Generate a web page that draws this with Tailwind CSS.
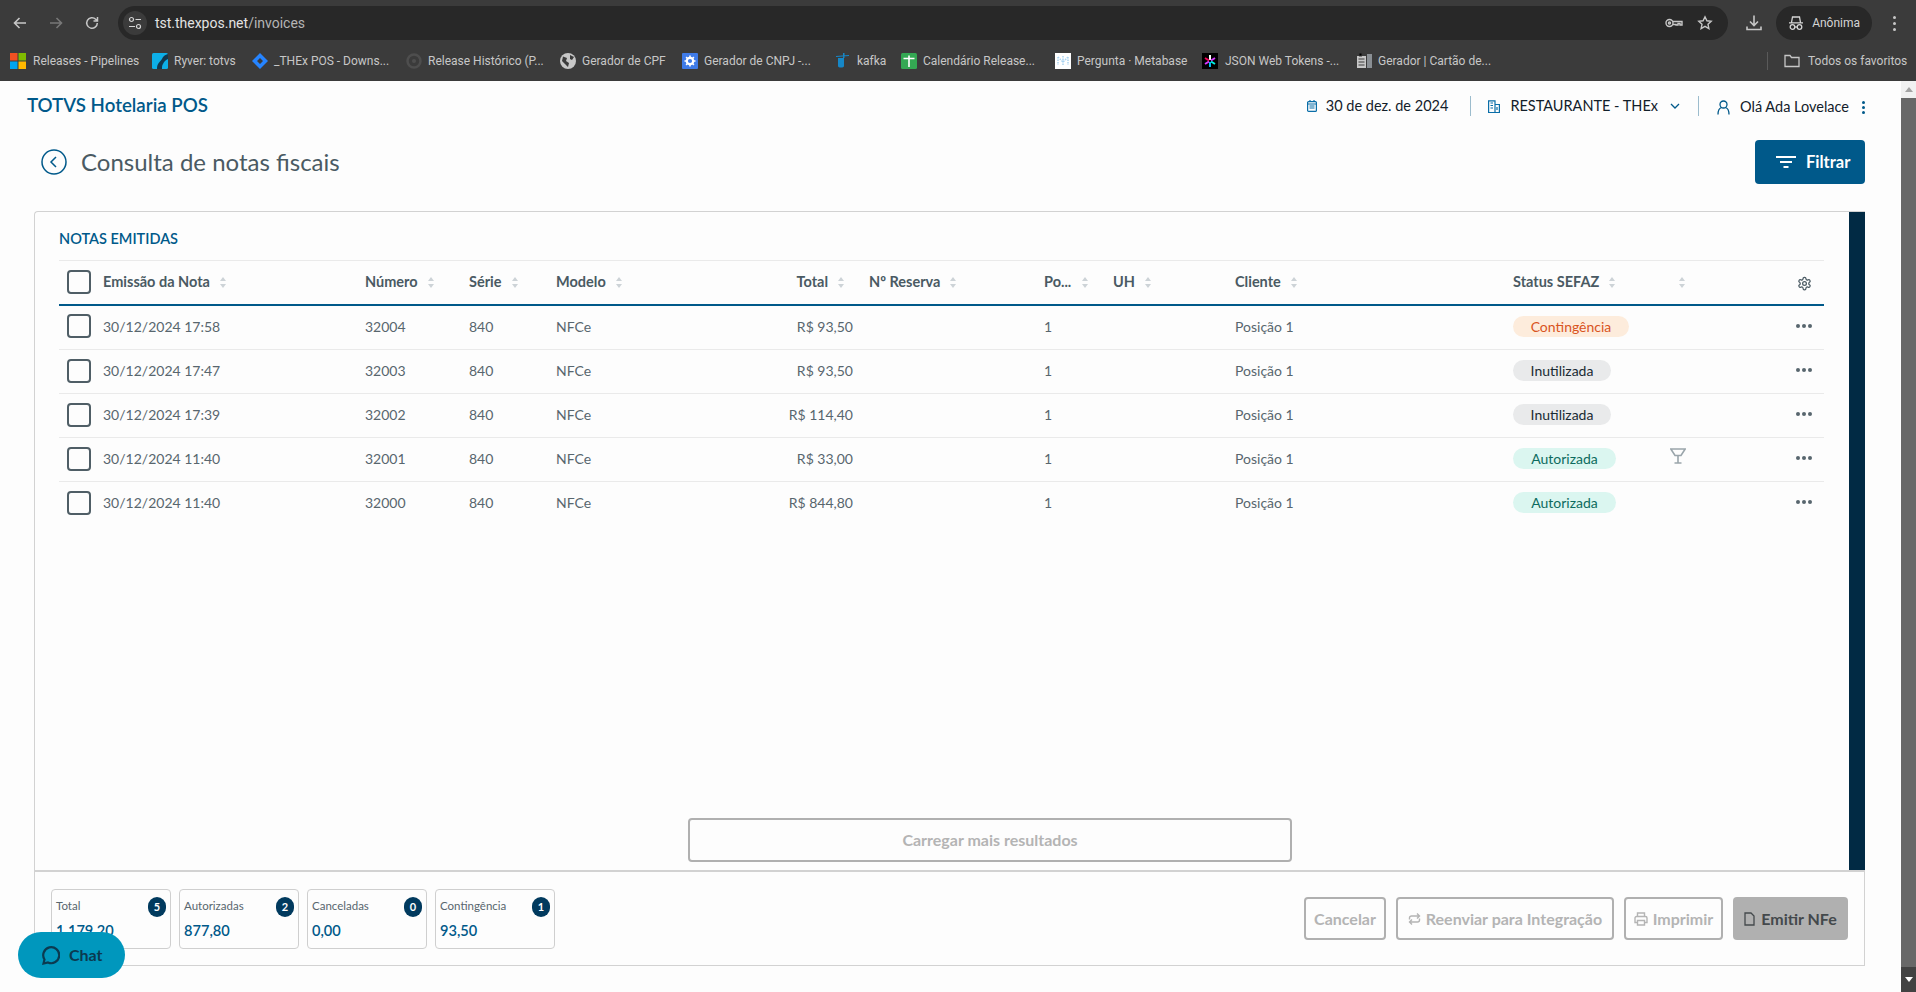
<!DOCTYPE html>
<html lang="pt-BR">
  <head>
    <meta charset="UTF-8" />
    <meta name="viewport" content="width=device-width, initial-scale=1.0" />
    <script src="https://cdn.jsdelivr.net/npm/@tailwindcss/browser@4"></script>
    <title>TOTVS Hotelaria POS</title>
  </head>
  <body class="h-[992px] w-[1916px] overflow-hidden flex flex-col bg-[#fdfdfd] font-['Lato',sans-serif]">
    <!-- Browser chrome -->
    <div class="h-[81px] shrink-0 bg-[#3b3b3b] font-['Roboto',sans-serif]">
      <div class="h-[40px] pt-[6px] flex items-start">
        <div class="w-[118px] h-[34px] flex items-center text-[#c7c7c7]">
          <svg class="ml-[12px]" width="16" height="16" viewBox="0 0 16 16" fill="none" stroke="currentColor" stroke-width="1.6"><path d="M14 8H2.500M7.500 3 2.500 8l5 5" /></svg>
          <svg class="ml-[20px] text-[#787878]" width="16" height="16" viewBox="0 0 16 16" fill="none" stroke="currentColor" stroke-width="1.6"><path d="M2 8h11.500M8.500 3l5 5-5 5" /></svg>
          <svg class="ml-[20px]" width="16" height="16" viewBox="0 0 16 16" fill="none" stroke="currentColor" stroke-width="1.5"><path d="M13.300 8a5.300 5.300 0 1 1-1.600-3.800L13.500 6M13.500 2v4h-4" /></svg>
        </div>
        <div class="w-[1612px] h-[34px] rounded-full bg-[#282828] flex items-center">
          <div class="ml-[5px] w-[24px] h-[24px] rounded-full bg-[#3b3b3b] flex items-center justify-center">
            <svg width="14" height="14" viewBox="0 0 14 14" fill="none" stroke="#d5d5d5" stroke-width="1.2"><circle cx="3.500" cy="3.500" r="2" /><path d="M7.500 3.500H13M1 10.500h6" /><circle cx="10.500" cy="10.500" r="2" /></svg>
          </div>
          <span class="ml-[8px] text-[14px] text-[#e3e3e3]">tst.thexpos.net<span class="text-[#b5b5b5]">/invoices</span></span>
          <svg class="ml-auto" width="18" height="12" viewBox="0 0 18 12" fill="none" stroke="#c7c7c7" stroke-width="1.400"><circle cx="4.500" cy="6" r="3.500" /><circle cx="4.500" cy="6" r="1" /><path d="M8 4.500h9v3.500h-2V6.500h-2v1.500h-2V7.500H8" /></svg>
          <svg class="ml-[14px] mr-[15px]" width="16" height="16" viewBox="0 0 16 16" fill="none" stroke="#c7c7c7" stroke-width="1.400"><path d="m8 1.800 1.900 4 4.300.5-3.200 3 .9 4.300L8 11.400l-3.900 2.200.9-4.300-3.200-3 4.300-.5z" /></svg>
        </div>
        <div class="w-[48px] h-[34px] pl-[4px] flex items-center justify-center">
          <svg width="18" height="18" viewBox="0 0 18 18" fill="none" stroke="#c7c7c7" stroke-width="1.600"><path d="M9 1.500V11M5 7.500 9 11.500l4-4M2 12.500v3h14v-3" /></svg>
        </div>
        <div class="w-[96px] h-[34px] rounded-full bg-[#282828] flex items-center text-[#d5d5d5]">
          <svg class="ml-[12px]" width="16" height="16" viewBox="0 0 16 16" fill="none" stroke="currentColor" stroke-width="1.300"><path d="M1 7.800h14M3.500 7.500l1-5.500h7l1 5.500" /><circle cx="4.500" cy="12" r="2.300" /><circle cx="11.500" cy="12" r="2.300" /><path d="M6.800 12h2.400" /></svg>
          <span class="ml-[8px] text-[12px]">Anônima</span>
        </div>
        <div class="w-[44px] h-[34px] flex flex-col items-center justify-center gap-[3px]">
          <span class="w-[3px] h-[3px] rounded-full bg-[#c7c7c7]"></span>
          <span class="w-[3px] h-[3px] rounded-full bg-[#c7c7c7]"></span>
          <span class="w-[3px] h-[3px] rounded-full bg-[#c7c7c7]"></span>
        </div>
      </div>
      <div class="h-[41px] pl-[10px] flex items-center text-[12px] text-[#c7c7c7] whitespace-nowrap">
        <div class="w-[142px] flex items-center gap-[7px]">
          <svg width="16" height="16" viewBox="0 0 16 16"><rect width="7.500" height="7.500" fill="#f25022" /><rect x="8.500" width="7.500" height="7.500" fill="#7fba00" /><rect y="8.500" width="7.500" height="7.500" fill="#00a4ef" /><rect x="8.500" y="8.500" width="7.500" height="7.500" fill="#ffb900" /></svg>
          <span>Releases - Pipelines</span>
        </div>
        <div class="w-[100px] flex items-center gap-[6px]">
          <svg width="16" height="16" viewBox="0 0 16 16"><rect width="16" height="16" rx="1.500" fill="#0dafe8" /><path d="M5 16C5 10 8 9 10 6c1-2 2-4 6-5v5c-3 1-4 3-5 5-1 1-1 3-1 5z" fill="#13374d" /></svg>
          <span>Ryver: totvs</span>
        </div>
        <div class="w-[154px] flex items-center gap-[6px]">
          <svg width="16" height="16" viewBox="0 0 16 16"><path d="M8 0 16 8 8 16 0 8zM8 5 5 8l3 3 3-3z" fill="#2684ff" fill-rule="evenodd" /></svg>
          <span>_THEx POS - Downs...</span>
        </div>
        <div class="w-[154px] flex items-center gap-[6px]">
          <svg width="16" height="16" viewBox="0 0 16 16" fill="none"><circle cx="8" cy="8" r="6.500" stroke="#4e4e4e" stroke-width="2.500" /><circle cx="8" cy="8" r="2" fill="#4e4e4e" /></svg>
          <span>Release Histórico (P...</span>
        </div>
        <div class="w-[122px] flex items-center gap-[6px]">
          <svg width="16" height="16" viewBox="0 0 16 16"><circle cx="8" cy="8" r="8" fill="#c7c7c7" /><path d="M3 3.500 7 5 6 8l3 2-1 4-3-3-3-3zM10 2l4 2-2 3-2-1z" fill="#3b3b3b" /></svg>
          <span>Gerador de CPF</span>
        </div>
        <div class="w-[153px] flex items-center gap-[6px]">
          <svg width="16" height="16" viewBox="0 0 16 16"><rect width="16" height="16" rx="1" fill="#3f7be8" /><circle cx="8" cy="8" r="3.200" fill="none" stroke="#fff" stroke-width="2.200" /><path d="M8 2.500v2M8 11.500v2M2.500 8h2M11.500 8h2M4.100 4.100l1.400 1.400M10.500 10.500l1.400 1.400M4.100 11.900l1.400-1.400M10.500 5.500l1.400-1.400" stroke="#fff" stroke-width="1.600" /></svg>
          <span>Gerador de CNPJ -...</span>
        </div>
        <div class="w-[66px] flex items-center gap-[7px]">
          <svg width="15" height="16" viewBox="0 0 15 16"><path d="M3 5h6v8c0 2-6 2-6 0zM8 0h1.500v5H8zM1 3l13-1v1L1 4z" fill="#1687c7" /></svg>
          <span>kafka</span>
        </div>
        <div class="w-[154px] flex items-center gap-[6px]">
          <svg width="16" height="16" viewBox="0 0 16 16"><rect width="16" height="16" rx="1.500" fill="#34a853" /><path d="M2.500 5.500h11M8 2.500V14" stroke="#fff" stroke-width="1.600" /></svg>
          <span>Calendário Release...</span>
        </div>
        <div class="w-[147px] flex items-center gap-[6px]">
          <svg width="16" height="16" viewBox="0 0 16 16"><rect width="16" height="16" fill="#fff" /><path d="M3 4v8M13 4v8M8 3v10M3 4l5 5 5-5" stroke="#a9d3f0" stroke-width="1.500" fill="none" stroke-dasharray="1.500 1" /></svg>
          <span>Pergunta · Metabase</span>
        </div>
        <div class="w-[155px] flex items-center gap-[7px]">
          <svg width="16" height="16" viewBox="0 0 16 16"><rect width="16" height="16" fill="#000" /><path d="M8 2v5" stroke="#fff" stroke-width="2" /><path d="M8 9v5" stroke="#00b9f1" stroke-width="2" /><path d="m3 5 4 2.500" stroke="#fb015b" stroke-width="2" /><path d="m13 5-4 2.500" stroke="#d63aff" stroke-width="2" /><path d="m3 11 4-2.500" stroke="#d63aff" stroke-width="2" /><path d="m13 11-4-2.500" stroke="#00f2e6" stroke-width="2" /></svg>
          <span>JSON Web Tokens -...</span>
        </div>
        <div class="w-[410px] flex items-center gap-[6px]">
          <svg width="15" height="16" viewBox="0 0 15 16"><rect y="3" width="9" height="12" fill="#c7c7c7" /><rect x="10" y="1" width="5" height="14" fill="#8a8f94" /><path d="M2 0h3v3H2zM1.500 6h6M1.500 9h6M1.500 12h6" stroke="#3b3b3b" /></svg>
          <span>Gerador | Cartão de...</span>
        </div>
        <div class="w-px h-[18px] bg-[#5a5a5a]"></div>
        <div class="ml-[16px] flex items-center gap-[8px]">
          <svg width="16" height="14" viewBox="0 0 16 14" fill="none" stroke="#c7c7c7" stroke-width="1.300"><path d="M1 2v10.500h14V3.500H7.500L6 1.500H1z" /></svg>
          <span>Todos os favoritos</span>
        </div>
      </div>
    </div>

    <div class="flex-1 flex min-h-0">
      <!-- Page -->
      <div class="relative w-[1901px] flex flex-col">
        <header class="h-[48px] shrink-0 pl-[27px] pt-[13px] flex items-start">
          <span class="text-[18.7px] leading-[22px] font-semibold text-[#00598a]">TOTVS Hotelaria POS</span>
          <div class="ml-auto mr-[36px] flex items-center text-[14.5px] leading-[22px] text-[#12202a]">
            <svg width="10" height="12" viewBox="0 0 10 12" fill="none" stroke="#0a6ea8" stroke-width="1.200"><rect x=".6" y="1.600" width="8.800" height="9.800" rx="1" /><path d="M.6 4h8.800M2.500 6h5M2.500 8h5M3 0v2M7 0v2" /></svg>
            <span class="ml-[9px]">30 de dez. de 2024</span>
            <span class="ml-[22px] w-px h-[20px] bg-[#9cbccd]"></span>
            <svg class="ml-[17px]" width="12" height="13" viewBox="0 0 12 13" fill="none" stroke="#0a6ea8" stroke-width="1.200"><path d="M.6 12.500V.8h6.400v11.700M7 4.500h4.400v8M0 12.500h12M2.500 3h2.500M2.500 5.500h2.500M2.500 8h2.500M9 7v3" /></svg>
            <span class="ml-[10px]">RESTAURANTE - THEx</span>
            <svg class="ml-[12px]" width="10" height="6" viewBox="0 0 10 6" fill="none" stroke="#00598a" stroke-width="1.300"><path d="m1 1 4 4 4-4" /></svg>
            <span class="ml-[18px] w-px h-[20px] bg-[#9cbccd]"></span>
            <svg class="ml-[18px] mt-[2px]" width="13" height="15" viewBox="0 0 13 15" fill="none" stroke="#00598a" stroke-width="1.300"><circle cx="6.500" cy="4.500" r="3.500" /><path d="M1 14.500c0-4 2-6.500 3.500-7M12 14.500c0-4-2-6.500-3.500-7" /></svg>
            <span class="ml-[10px] mt-[2px]">Olá Ada Lovelace</span>
            <span class="ml-[13px] mt-[2px] flex flex-col gap-[2px]">
              <span class="w-[3px] h-[3px] rounded-full bg-[#00598a]"></span>
              <span class="w-[3px] h-[3px] rounded-full bg-[#00598a]"></span>
              <span class="w-[3px] h-[3px] rounded-full bg-[#00598a]"></span>
            </span>
          </div>
        </header>

        <div class="h-[82px] shrink-0 pl-[41px] pr-[36px] pt-[11px] flex items-start">
          <div class="h-[44px] flex items-center gap-[14px]">
            <svg width="26" height="26" viewBox="0 0 26 26" fill="none" stroke="#00598a" stroke-width="1.500"><circle cx="13" cy="13" r="12" /><path d="m15 8-5 5 5 5" /></svg>
            <h1 class="text-[24px] font-normal text-[#4a5a63]">Consulta de notas fiscais</h1>
          </div>
          <button class="ml-auto w-[110px] h-[44px] pl-[21px] rounded-[4px] bg-[#00598a] text-white text-[16.5px] font-bold flex items-center gap-[10px]">
            <svg width="20" height="12" viewBox="0 0 20 12" fill="none" stroke="#fff" stroke-width="1.800"><path d="M0 1h20M4 6h12M7.500 11h5" /></svg>
            Filtrar
          </button>
        </div>

        <!-- Main card -->
        <div class="ml-[34px] w-[1831px] h-[661px] flex border border-[#d2d2d2] border-r-0 border-b-2 rounded-tl-[4px]">
          <div class="flex-1 flex flex-col pl-[24px] pr-[24px]">
            <h2 class="h-[48px] pt-[18px] text-[14.5px] leading-[18px] font-semibold text-[#00598a]">NOTAS EMITIDAS</h2>
            <table class="w-[1765px] table-fixed border-collapse text-[14px] text-[#58666e]">
              <colgroup>
                <col class="w-[44px]" /><col class="w-[262px]" /><col class="w-[104px]" /><col class="w-[87px]" /><col class="w-[144px]" /><col class="w-[169px]" /><col class="w-[175px]" /><col class="w-[69px]" /><col class="w-[122px]" /><col class="w-[278px]" /><col class="w-[157px]" /><col class="w-[114px]" /><col class="w-[40px]" />
              </colgroup>
              <thead class="border-t border-[#eaeaea] border-b-2 border-b-[#00598a] text-[14.5px]">
                <tr class="h-[44px] text-left text-[#4a5a63]">
                  <th class="pl-[8px] font-bold"><span class="block w-[24px] h-[24px] rounded-[4px] border-2 border-[#4f5e66]"></span></th>
                  <th class="font-bold"><span class="flex items-center gap-[10px]">Emissão da Nota <svg width="6" height="11" viewBox="0 0 6 11" fill="#cdd3d7"><path d="M3 0l3 4H0zM3 11 0 7h6z" /></svg></span></th>
                  <th class="font-bold"><span class="flex items-center gap-[10px]">Número <svg width="6" height="11" viewBox="0 0 6 11" fill="#cdd3d7"><path d="M3 0l3 4H0zM3 11 0 7h6z" /></svg></span></th>
                  <th class="font-bold"><span class="flex items-center gap-[10px]">Série <svg width="6" height="11" viewBox="0 0 6 11" fill="#cdd3d7"><path d="M3 0l3 4H0zM3 11 0 7h6z" /></svg></span></th>
                  <th class="font-bold"><span class="flex items-center gap-[10px]">Modelo <svg width="6" height="11" viewBox="0 0 6 11" fill="#cdd3d7"><path d="M3 0l3 4H0zM3 11 0 7h6z" /></svg></span></th>
                  <th class="pr-[25px] font-bold"><span class="flex items-center justify-end gap-[10px]">Total <svg width="6" height="11" viewBox="0 0 6 11" fill="#cdd3d7"><path d="M3 0l3 4H0zM3 11 0 7h6z" /></svg></span></th>
                  <th class="font-bold"><span class="flex items-center gap-[10px]">Nº Reserva <svg width="6" height="11" viewBox="0 0 6 11" fill="#cdd3d7"><path d="M3 0l3 4H0zM3 11 0 7h6z" /></svg></span></th>
                  <th class="font-bold"><span class="flex items-center gap-[11px]">Po... <svg width="6" height="11" viewBox="0 0 6 11" fill="#cdd3d7"><path d="M3 0l3 4H0zM3 11 0 7h6z" /></svg></span></th>
                  <th class="font-bold"><span class="flex items-center gap-[10px]">UH <svg width="6" height="11" viewBox="0 0 6 11" fill="#cdd3d7"><path d="M3 0l3 4H0zM3 11 0 7h6z" /></svg></span></th>
                  <th class="font-bold"><span class="flex items-center gap-[10px]">Cliente <svg width="6" height="11" viewBox="0 0 6 11" fill="#cdd3d7"><path d="M3 0l3 4H0zM3 11 0 7h6z" /></svg></span></th>
                  <th class="font-bold"><span class="flex items-center gap-[10px]">Status SEFAZ <svg width="6" height="11" viewBox="0 0 6 11" fill="#cdd3d7"><path d="M3 0l3 4H0zM3 11 0 7h6z" /></svg></span></th>
                  <th class="pl-[9px]"><svg width="6" height="11" viewBox="0 0 6 11" fill="#cdd3d7"><path d="M3 0l3 4H0zM3 11 0 7h6z" /></svg></th>
                  <th class="text-center"><svg class="inline-block" width="15" height="15" viewBox="0 0 24 24" fill="none" stroke="#4a5a63" stroke-width="2"><path d="M12.220 2h-.44a2 2 0 0 0-2 2v.18a2 2 0 0 1-1 1.730l-.43.25a2 2 0 0 1-2 0l-.15-.08a2 2 0 0 0-2.730.73l-.22.38a2 2 0 0 0 .73 2.730l.15.1a2 2 0 0 1 1 1.720v.51a2 2 0 0 1-1 1.740l-.15.09a2 2 0 0 0-.73 2.730l.22.38a2 2 0 0 0 2.730.73l.15-.08a2 2 0 0 1 2 0l.43.25a2 2 0 0 1 1 1.730V20a2 2 0 0 0 2 2h.44a2 2 0 0 0 2-2v-.18a2 2 0 0 1 1-1.730l.43-.25a2 2 0 0 1 2 0l.15.08a2 2 0 0 0 2.730-.73l.22-.39a2 2 0 0 0-.73-2.730l-.15-.08a2 2 0 0 1-1-1.740v-.5a2 2 0 0 1 1-1.740l.15-.09a2 2 0 0 0 .73-2.730l-.22-.38a2 2 0 0 0-2.730-.73l-.15.08a2 2 0 0 1-2 0l-.43-.25a2 2 0 0 1-1-1.730V4a2 2 0 0 0-2-2z" /><circle cx="12" cy="12" r="3" /></svg></th>
                </tr>
              </thead>
              <tbody class="[&_td]:pb-[2px]">
                <tr class="h-[45px] border-b border-[#eaeaea]">
                  <td class="pl-[8px]"><span class="block w-[24px] h-[24px] rounded-[4px] border-2 border-[#4f5e66]"></span></td>
                  <td>30/12/2024 17:58</td><td>32004</td><td>840</td><td>NFCe</td><td class="pr-[16px] text-right">R$ 93,50</td><td></td><td>1</td><td></td><td>Posição 1</td>
                  <td><span class="inline-block h-[21px] leading-[21px] w-[116px] text-center rounded-full bg-[#fdecdc] text-[#d9541e]">Contingência</span></td>
                  <td></td>
                  <td class="text-center align-top pt-[6px]"><span class="inline-flex gap-[2px]"><i class="w-[4px] h-[4px] rounded-full bg-[#58666e]"></i><i class="w-[4px] h-[4px] rounded-full bg-[#58666e]"></i><i class="w-[4px] h-[4px] rounded-full bg-[#58666e]"></i></span></td>
                </tr>
                <tr class="h-[44px] border-b border-[#eaeaea]">
                  <td class="pl-[8px]"><span class="block w-[24px] h-[24px] rounded-[4px] border-2 border-[#4f5e66]"></span></td>
                  <td>30/12/2024 17:47</td><td>32003</td><td>840</td><td>NFCe</td><td class="pr-[16px] text-right">R$ 93,50</td><td></td><td>1</td><td></td><td>Posição 1</td>
                  <td><span class="inline-block h-[21px] leading-[21px] w-[98px] text-center rounded-full bg-[#e9eaeb] text-[#1a2a33]">Inutilizada</span></td>
                  <td></td>
                  <td class="text-center align-top pt-[6px]"><span class="inline-flex gap-[2px]"><i class="w-[4px] h-[4px] rounded-full bg-[#58666e]"></i><i class="w-[4px] h-[4px] rounded-full bg-[#58666e]"></i><i class="w-[4px] h-[4px] rounded-full bg-[#58666e]"></i></span></td>
                </tr>
                <tr class="h-[44px] border-b border-[#eaeaea]">
                  <td class="pl-[8px]"><span class="block w-[24px] h-[24px] rounded-[4px] border-2 border-[#4f5e66]"></span></td>
                  <td>30/12/2024 17:39</td><td>32002</td><td>840</td><td>NFCe</td><td class="pr-[16px] text-right">R$ 114,40</td><td></td><td>1</td><td></td><td>Posição 1</td>
                  <td><span class="inline-block h-[21px] leading-[21px] w-[98px] text-center rounded-full bg-[#e9eaeb] text-[#1a2a33]">Inutilizada</span></td>
                  <td></td>
                  <td class="text-center align-top pt-[6px]"><span class="inline-flex gap-[2px]"><i class="w-[4px] h-[4px] rounded-full bg-[#58666e]"></i><i class="w-[4px] h-[4px] rounded-full bg-[#58666e]"></i><i class="w-[4px] h-[4px] rounded-full bg-[#58666e]"></i></span></td>
                </tr>
                <tr class="h-[44px] border-b border-[#eaeaea]">
                  <td class="pl-[8px]"><span class="block w-[24px] h-[24px] rounded-[4px] border-2 border-[#4f5e66]"></span></td>
                  <td>30/12/2024 11:40</td><td>32001</td><td>840</td><td>NFCe</td><td class="pr-[16px] text-right">R$ 33,00</td><td></td><td>1</td><td></td><td>Posição 1</td>
                  <td><span class="inline-block h-[21px] leading-[21px] w-[103px] text-center rounded-full bg-[#dbf6f0] text-[#0d6b5e]">Autorizada</span></td>
                  <td class="align-top pt-[10px]"><svg class="block" width="16" height="16" viewBox="0 0 16 16" fill="none" stroke="#9aa5ab" stroke-width="1.600"><path d="M.8 1h14.400L11 7.500H5zM8 8v6.500M4.500 15h7" /></svg></td>
                  <td class="text-center align-top pt-[6px]"><span class="inline-flex gap-[2px]"><i class="w-[4px] h-[4px] rounded-full bg-[#58666e]"></i><i class="w-[4px] h-[4px] rounded-full bg-[#58666e]"></i><i class="w-[4px] h-[4px] rounded-full bg-[#58666e]"></i></span></td>
                </tr>
                <tr class="h-[44px]">
                  <td class="pl-[8px]"><span class="block w-[24px] h-[24px] rounded-[4px] border-2 border-[#4f5e66]"></span></td>
                  <td>30/12/2024 11:40</td><td>32000</td><td>840</td><td>NFCe</td><td class="pr-[16px] text-right">R$ 844,80</td><td></td><td>1</td><td></td><td>Posição 1</td>
                  <td><span class="inline-block h-[21px] leading-[21px] w-[103px] text-center rounded-full bg-[#dbf6f0] text-[#0d6b5e]">Autorizada</span></td>
                  <td></td>
                  <td class="text-center align-top pt-[6px]"><span class="inline-flex gap-[2px]"><i class="w-[4px] h-[4px] rounded-full bg-[#58666e]"></i><i class="w-[4px] h-[4px] rounded-full bg-[#58666e]"></i><i class="w-[4px] h-[4px] rounded-full bg-[#58666e]"></i></span></td>
                </tr>
              </tbody>
            </table>
            <div class="mt-auto mb-[8px] flex justify-center pl-[96px]">
              <button class="w-[604px] h-[44px] rounded-[4px] border-2 border-[#b0b0b0] text-[#b4b4b4] text-[16px] font-bold">Carregar mais resultados</button>
            </div>
          </div>
          <div class="w-[16px] bg-[#012a44]"></div>
        </div>

        <!-- Footer panel -->
        <div class="ml-[34px] w-[1831px] h-[94px] border border-t-0 border-[#d2d2d2] pl-[16px] pr-[16px] pt-[17px] flex items-start">
          <div class="w-[120px] h-[60px] mr-[8px] rounded-[4px] border border-[#cfcfcf] relative px-[4px] pt-[8px]">
            <p class="text-[11.5px] leading-[16px] text-[#58666e]">Total</p>
            <p class="mt-[7px] text-[14.6px] leading-[20px] font-semibold text-[#00598a]">1.179,20</p>
            <span class="absolute top-[7px] right-[4px] w-[18px] h-[20px] rounded-full bg-[#013a5e] text-white text-[11px] font-bold flex items-center justify-center">5</span>
          </div>
          <div class="w-[120px] h-[60px] mr-[8px] rounded-[4px] border border-[#cfcfcf] relative px-[4px] pt-[8px]">
            <p class="text-[11.5px] leading-[16px] text-[#58666e]">Autorizadas</p>
            <p class="mt-[7px] text-[14.6px] leading-[20px] font-semibold text-[#00598a]">877,80</p>
            <span class="absolute top-[7px] right-[4px] w-[18px] h-[20px] rounded-full bg-[#013a5e] text-white text-[11px] font-bold flex items-center justify-center">2</span>
          </div>
          <div class="w-[120px] h-[60px] mr-[8px] rounded-[4px] border border-[#cfcfcf] relative px-[4px] pt-[8px]">
            <p class="text-[11.5px] leading-[16px] text-[#58666e]">Canceladas</p>
            <p class="mt-[7px] text-[14.6px] leading-[20px] font-semibold text-[#00598a]">0,00</p>
            <span class="absolute top-[7px] right-[4px] w-[18px] h-[20px] rounded-full bg-[#013a5e] text-white text-[11px] font-bold flex items-center justify-center">0</span>
          </div>
          <div class="w-[120px] h-[60px] rounded-[4px] border border-[#cfcfcf] relative px-[4px] pt-[8px]">
            <p class="text-[11.5px] leading-[16px] text-[#58666e]">Contingência</p>
            <p class="mt-[7px] text-[14.6px] leading-[20px] font-semibold text-[#00598a]">93,50</p>
            <span class="absolute top-[7px] right-[4px] w-[18px] h-[20px] rounded-full bg-[#013a5e] text-white text-[11px] font-bold flex items-center justify-center">1</span>
          </div>
          <div class="ml-auto mt-[8px] flex gap-[10px] text-[16px] font-bold text-[#b4b4b4]">
            <button class="w-[82px] h-[43px] rounded-[4px] border-2 border-[#b0b0b0]">Cancelar</button>
            <button class="w-[218px] h-[43px] rounded-[4px] border-2 border-[#b0b0b0] flex items-center justify-center gap-[5px]">
              <svg width="13" height="14" viewBox="0 0 13 14" fill="none" stroke="#b4b4b4" stroke-width="1.400"><path d="M1.500 7.500V6a2 2 0 0 1 2-2H11M9 1.500 11.500 4 9 6.500M11.500 6.500V8a2 2 0 0 1-2 2H2M4 7.500 1.500 10 4 12.500" /></svg>
              Reenviar para Integração
            </button>
            <button class="w-[99px] h-[43px] rounded-[4px] border-2 border-[#b0b0b0] flex items-center justify-center gap-[5px]">
              <svg width="14" height="14" viewBox="0 0 14 14" fill="none" stroke="#b4b4b4" stroke-width="1.400"><path d="M3.500 4.500V1h7v3.500M3.500 10.500H1V6a1.500 1.500 0 0 1 1.500-1.500h9A1.500 1.500 0 0 1 13 6v4.500h-2.500M3.500 8.500h7V13h-7z" /></svg>
              Imprimir
            </button>
            <button class="w-[115px] h-[43px] rounded-[4px] bg-[#b0b0b0] text-[#44494c] flex items-center justify-center gap-[6px]">
              <svg width="11" height="14" viewBox="0 0 11 14" fill="none" stroke="#44494c" stroke-width="1.300"><path d="M1 1h6l3 3v9H1z" /></svg>
              Emitir NFe
            </button>
          </div>
        </div>

        <!-- Chat widget -->
        <button class="absolute left-[18px] top-[851px] w-[107px] h-[46px] rounded-full bg-[#0097bd] flex items-center pl-[22px] gap-[9px] text-[16px] font-bold text-[#0b3a50]">
          <svg width="20" height="20" viewBox="0 0 20 20" fill="none" stroke="#0b3a50" stroke-width="2.200"><path d="M3.500 18.500 4.500 14.500A8 8 0 1 1 8 17.500z" /></svg>
          Chat
        </button>
      </div>

      <!-- Scrollbar -->
      <div class="w-[15px] flex flex-col bg-[#f1f1f1]">
        <div class="h-[17px] flex items-center justify-center">
          <span class="w-0 h-0 border-x-[4px] border-x-transparent border-b-[5px] border-b-[#a3a3a3]"></span>
        </div>
        <div class="flex-1 bg-[#686868]"></div>
        <div class="h-[25px] bg-[#424242] flex items-center justify-center">
          <span class="w-0 h-0 border-x-[4px] border-x-transparent border-t-[5px] border-t-white"></span>
        </div>
      </div>
    </div>
  </body>
</html>
